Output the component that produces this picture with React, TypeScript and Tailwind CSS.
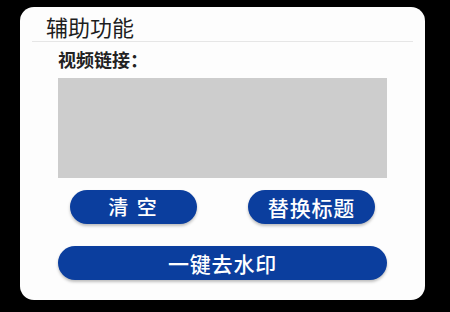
// Helper-function panel: video link input area plus action buttons.

const FONT = "font-['Noto_Sans_CJK_SC','Noto_Sans',sans-serif]";

export default function App() {
  return (
    <div className={`w-[450px] h-[312px] bg-black pt-[7px] pl-[20px] ${FONT}`}>
      <div className="w-[405px] h-[293px] bg-[#fdfdfd] rounded-[14px] flex flex-col">
        <div className="mx-[12px] border-b border-[#e6e6e6] pl-[14px] h-[35px] flex items-end">
          <span className="text-[22px] leading-[29px] text-[#1e1e1e]">辅助功能</span>
        </div>
        <div className="pl-[38px] pr-[38px] flex flex-col">
          <p className="mt-[6px] text-[18px] leading-[22px] font-bold text-[#222]">视频链接：</p>
          <div className="mt-[8px] h-[100px] bg-[#cdcdcd]" />
          <div className="mt-[12px] flex justify-between px-[12px]">
            <button className="w-[127px] h-[34px] rounded-full bg-[#0b3e9e] text-white text-[20px] leading-none font-medium tracking-[0.1em] shadow-[0_2px_3px_rgba(0,0,0,0.25)]">
              清 空
            </button>
            <button className="w-[127px] h-[34px] rounded-full bg-[#0b3e9e] text-white text-[21px] leading-none font-medium tracking-[0.04em] shadow-[0_2px_3px_rgba(0,0,0,0.25)]">
              替换标题
            </button>
          </div>
          <button className="mt-[22px] h-[34px] rounded-full bg-[#0b3e9e] text-white text-[21px] leading-none font-medium tracking-[0.04em] shadow-[0_2px_3px_rgba(0,0,0,0.25)]">
            一键去水印
          </button>
        </div>
      </div>
    </div>
  );
}
